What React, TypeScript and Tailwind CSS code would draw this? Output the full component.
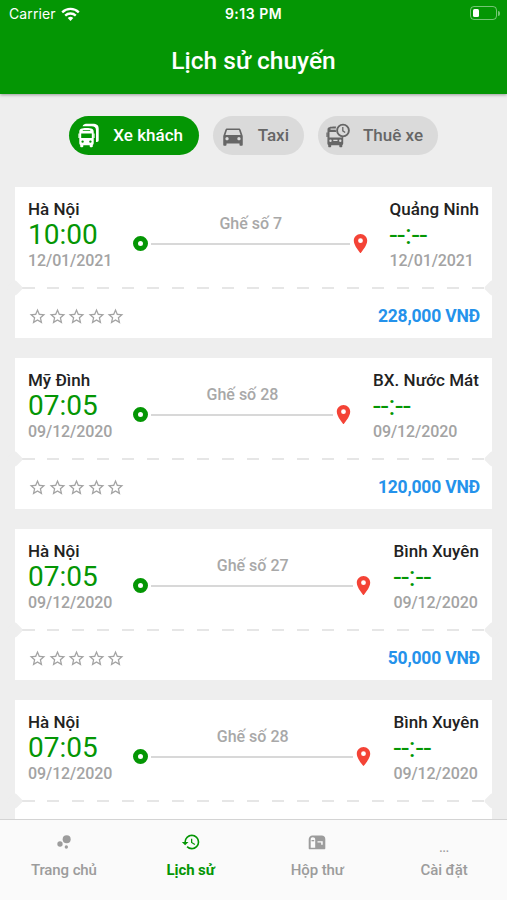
import React, { useState } from 'react';
import { MdBubbleChart, MdDirectionsCar, MdHistory, MdLocationOn, MdStarBorder } from 'react-icons/md';

interface Trip {
  id: number;
  from: string;
  to: string;
  departure: string;
  date: string;
  seat: string;
  price?: string;
}

const trips: Trip[] = [
  { id: 1, from: 'Hà Nội', to: 'Quảng Ninh', departure: '10:00', date: '12/01/2021', seat: '7', price: '228,000' },
  { id: 2, from: 'Mỹ Đình', to: 'BX. Nước Mát', departure: '07:05', date: '09/12/2020', seat: '28', price: '120,000' },
  { id: 3, from: 'Hà Nội', to: 'Bình Xuyên', departure: '07:05', date: '09/12/2020', seat: '27', price: '50,000' },
  { id: 4, from: 'Hà Nội', to: 'Bình Xuyên', departure: '07:05', date: '09/12/2020', seat: '28' },
];

const CoachIcon = () => (
  <svg className="w-[22px] h-[25px]" viewBox="0 0 22 25" fill="currentColor">
    <path d="M4.500 3.200C5.300 1.200 7 .8 9.500.8h5c4.500 0 6.200 1.400 6.200 5v11.500c0 1-.7 1.700-1.700 1.700h-1V7.500c0-3-1.500-4.300-4.500-4.300z" />
    <path
      fillRule="evenodd"
      d="M1.300 8.700C1.300 5.800 3.400 5 8.500 5s7.200.8 7.200 3.700v11.600c0 .8-.4 1.300-.9 1.700v1.300c0 .5-.4.9-.9.9h-1.300c-.5 0-.9-.4-.9-.9v-1H5.300v1c0 .5-.4.9-.9.9H3.100c-.5 0-.9-.4-.9-.9V22c-.5-.4-.9-.9-.9-1.700zM4.800 7.200v.9h7.400v-.9zM3.200 10.500v4.600h10.600v-4.600zm1.400 6.900a1.200 1.200 0 1 0 0 2.400 1.200 1.200 0 0 0 0-2.400zm7.800 0a1.200 1.200 0 1 0 0 2.400 1.200 1.200 0 0 0 0-2.400z"
    />
    <path d="M.4 10.500h1.200V15H.4zM15.400 10.500h1.200V15h-1.200z" />
  </svg>
);

const RentalIcon = () => (
  <svg className="w-6 h-[25px]" viewBox="0 0 24 25" fill="currentColor">
    <path
      fillRule="evenodd"
      d="M1.500 6.500C1.500 4.200 4 3.500 9 3.500h1.200a7 7 0 0 0-.5 2H4.500v1.300h5.200c.1.900.3 1.600.6 2.300H3.500v5.400h12.300v-.4c.5.100.9.100 1.400 0v6.400c0 .7-.3 1.200-.9 1.500v1.300c0 .6-.4 1-1 1h-1c-.6 0-1-.4-1-1v-1.100H5.200v1.100c0 .6-.4 1-1 1h-1c-.6 0-1-.4-1-1V22c-.5-.3-.8-.8-.8-1.500zM4.500 16.500a1.200 1.200 0 1 0 0 2.400 1.200 1.200 0 0 0 0-2.400zm9.800 0a1.200 1.200 0 1 0 0 2.400 1.200 1.200 0 0 0 0-2.400zM7.300 16.800v1.300h4.200v-1.300z"
    />
    <path d="M.4 9.500h1.300v4.500H.4z" />
    <circle cx="17" cy="7.500" r="5.900" fill="none" stroke="currentColor" strokeWidth="1.900" />
    <path d="M16.800 4v3.800l2.400 1.800" fill="none" stroke="currentColor" strokeWidth="1.300" />
  </svg>
);

const MailboxIcon = () => (
  <svg className="w-[18px] h-[15px]" viewBox="0 0 18 15" fill="currentColor">
    <path
      fillRule="evenodd"
      d="M4.500.5h9.300c2 0 3.500 1.500 3.500 3.500v9.300c0 .6-.4 1-1 1H1.700c-.6 0-1-.4-1-1V4.500c0-2.300 1.500-4 3.800-4zm.2 1.700c-1.300 0-2 .9-2 2.200v8.400h4.500V4.400c0-1.300-.9-2.200-2.500-2.200zM9.500 6.200v1.400h3.700v2.200h1.500V6.200z"
    />
    <path d="M3.500 5h2.700v1.300H3.500z" />
  </svg>
);

const WifiIcon = () => (
  <svg className="w-[19px] h-[14px]" viewBox="0 0 19 14" fill="none" stroke="white" strokeWidth="2.300">
    <path d="M1.200 5.300a12 12 0 0 1 16.600 0" />
    <path d="M4.200 8.600a7.700 7.700 0 0 1 10.600 0" />
    <path d="M9.500 13.900 6.700 11a4 4 0 0 1 5.600 0z" fill="white" stroke="none" />
  </svg>
);

const StatusBar = () => (
  <div className="h-7 px-[9px] grid grid-cols-3 items-center text-white font-['Inter',sans-serif] text-[14px]">
    <div className="flex items-center gap-[5px] -mt-px">
      <span className="tracking-[0.1px]">Carrier</span>
      <WifiIcon />
    </div>
    <span className="text-center font-semibold tracking-[0.5px] -mt-px">9:13 PM</span>
    <div className="flex items-center justify-end gap-px -mr-[2px] -mt-[2px]">
      <div className="w-[27px] h-[14px] rounded-[4px] border border-white/45 p-[2px]">
        <div className="w-[6px] h-full rounded-[1.5px] bg-white" />
      </div>
      <div className="w-[2px] h-[5px] rounded-r-full bg-white/45" />
    </div>
  </div>
);

const TripCard: React.FC<{ trip: Trip }> = ({ trip }) => {
  return (
    <div className="h-[151px] shrink-0 bg-white relative flex flex-col">
      <div className="h-[100px] pt-[11px] pl-[13px] pr-[13px] flex">
        <div className="w-[105px] flex flex-col">
          <span className="text-[17px] leading-[22px] font-medium text-[#222]">{trip.from}</span>
          <span className="text-[28px] leading-[30px] text-[#049604]">{trip.departure}</span>
          <span className="text-base leading-[22px] font-medium text-[#a3a3a3] tracking-[-0.1px]">{trip.date}</span>
        </div>
        <div className="flex-1 flex flex-col pt-[15px]">
          <span className="text-center text-base leading-[22px] font-medium text-[#a8a8a8] mr-[3px]">
            Ghế số {trip.seat}
          </span>
          <div className="flex items-center -mt-[3px]">
            <div className="w-[15px] h-[15px] rounded-full border-[5px] border-[#049604]" />
            <div className="flex-1 h-[2px] bg-[#d8d8d8] ml-[3px] -mr-px" />
            <MdLocationOn className="w-[23px] h-[23px] text-[#f44336]" />
          </div>
        </div>
        <div className="ml-[18px] flex flex-col">
          <span className="text-[17px] leading-[22px] font-medium text-[#222] tracking-[0.05px]">{trip.to}</span>
          <span className="text-[28px] leading-[30px] text-[#049604]">--:--</span>
          <span className="text-base leading-[22px] font-medium text-[#a3a3a3] tracking-[-0.1px]">{trip.date}</span>
        </div>
      </div>
      <div className="h-[2px] mx-[7px] bg-[repeating-linear-gradient(90deg,#e6e6e6_0_12.500px,transparent_12.500px_25px)]" />
      <div className="flex-1 pl-[13px] pr-[12px] pt-[6px] flex items-center justify-between">
        <div className="flex gap-[0.600px] text-[#a3a3a3]">
          {[1, 2, 3, 4, 5].map((star) => (
            <MdStarBorder key={star} className="w-[19px] h-[19px]" />
          ))}
        </div>
        {trip.price && (
          <span className="text-[17.500px] font-bold text-[#2492eb] tracking-[-0.2px]">{trip.price} VNĐ</span>
        )}
      </div>
      <div className="absolute -left-[6px] top-[95px] w-[12px] h-[12px] rotate-45 rounded-[3px] bg-[#eee]" />
      <div className="absolute -right-[6px] top-[95px] w-[12px] h-[12px] rotate-45 rounded-[3px] bg-[#eee]" />
    </div>
  );
};

const navItems = [
  { label: 'Trang chủ', icon: <MdBubbleChart className="w-5 h-5" /> },
  { label: 'Lịch sử', icon: <MdHistory className="w-5 h-5" /> },
  { label: 'Hộp thư', icon: <MailboxIcon /> },
  { label: 'Cài đặt', icon: <span className="text-xs leading-5 pt-3">...</span> },
];

const tabs = [
  { label: 'Xe khách', icon: <CoachIcon />, box: 'w-[130px] pl-[9px] pr-[16px]' },
  { label: 'Taxi', icon: <MdDirectionsCar className="w-[26px] h-[26px]" />, box: 'w-[91px] pl-[7px] pr-[15px]' },
  { label: 'Thuê xe', icon: <RentalIcon />, box: 'w-[120px] pl-[8px] pr-[15px]' },
];

const App: React.FC = () => {
  const [activeTab, setActiveTab] = useState(0);
  const [activeNav, setActiveNav] = useState(1);

  return (
    <div className="w-full h-[900px] flex flex-col overflow-hidden bg-[#eee] font-['Roboto',sans-serif]">
      <header className="h-[94px] shrink-0 bg-[#049604] shadow-[0_1px_3px_rgba(0,0,0,0.35)]">
        <StatusBar />
        <h1 className="text-center text-[24.500px] leading-[66px] font-medium text-white">Lịch sử chuyến</h1>
      </header>

      <div className="flex justify-center gap-[14px] pt-[22px] shrink-0">
        {tabs.map((tab, index) => (
          <button
            key={tab.label}
            onClick={() => setActiveTab(index)}
            className={`h-[39px] rounded-full flex items-center justify-between text-[17px] font-medium ${tab.box} ${
              activeTab === index ? 'bg-[#049604] text-white' : 'bg-[#dadada] text-[#666]'
            }`}
          >
            {tab.icon}
            {tab.label}
          </button>
        ))}
      </div>

      <main className="flex-1 min-h-0 overflow-hidden mt-8 px-[15px] flex flex-col gap-5">
        {trips.map((trip) => (
          <TripCard key={trip.id} trip={trip} />
        ))}
      </main>

      <nav className="h-[81px] shrink-0 bg-[#fafafa] border-t border-[#d4d4d4] grid grid-cols-4">
        {navItems.map((item, index) => (
          <button
            key={item.label}
            onClick={() => setActiveNav(index)}
            className={`flex flex-col items-center pt-3 pl-px text-[15px] tracking-[-0.1px] ${
              activeNav === index ? 'text-[#049604] font-bold' : 'text-[#9c9c9c] font-medium'
            }`}
          >
            <span className="h-5 flex items-center">{item.icon}</span>
            <span className="leading-5 mt-2">{item.label}</span>
          </button>
        ))}
      </nav>
    </div>
  );
};

export default App;
